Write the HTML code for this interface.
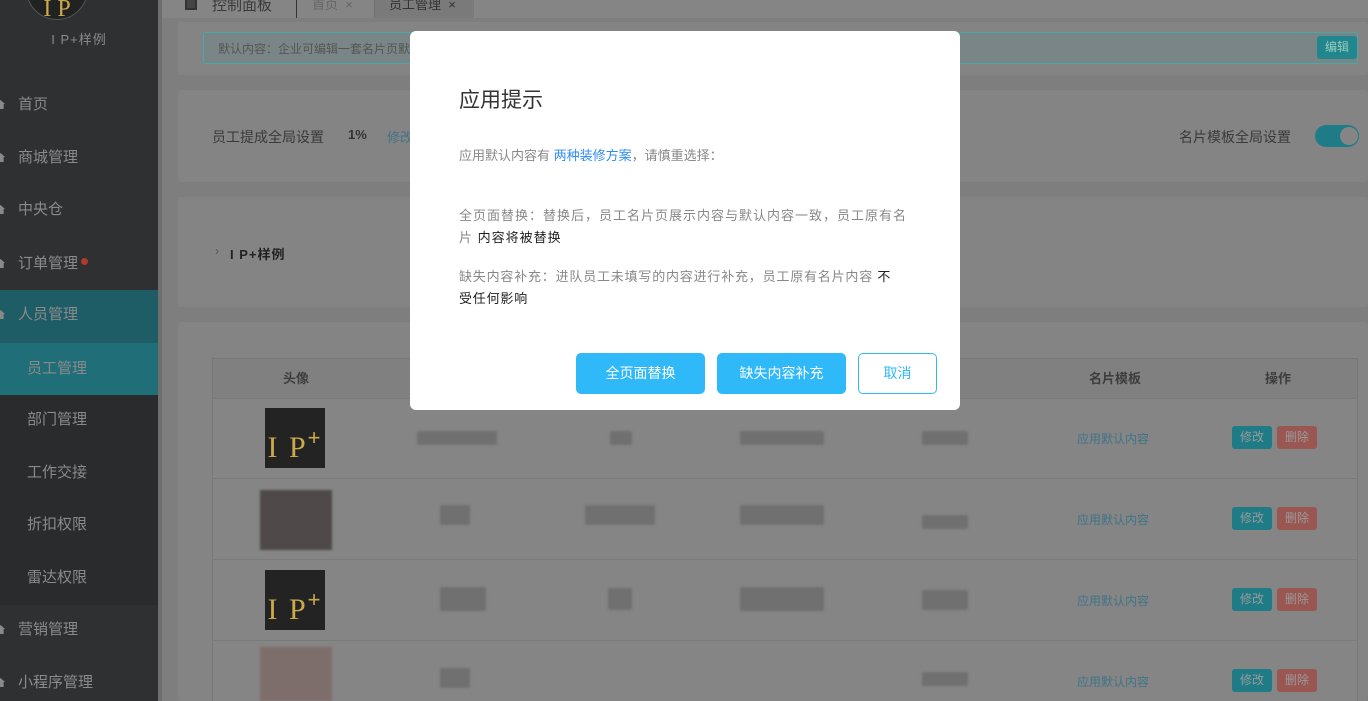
<!DOCTYPE html>
<html style="overflow:hidden;width:1368px;height:701px"><head><meta charset="utf-8">
<style>
*{margin:0;padding:0;box-sizing:border-box}
body{width:1368px;height:701px;overflow:hidden;position:relative;background:#7e7e7e;font-family:"Liberation Sans","Noto Sans CJK SC",sans-serif;font-size:14px}
.abs{position:absolute}
.side{left:0;top:0;width:158px;height:701px;background:#2f3032}
.strip{left:158px;top:0;width:4px;height:701px;background:#6e6e6e}
.mi{position:absolute;left:0;width:158px;height:52px;line-height:52px;color:#8a8a8a;font-size:15px;padding-left:18px}
.mi i{position:absolute;left:-4px;top:21px;width:9px;height:9px;background:#8a8a8a;clip-path:polygon(50% 0,100% 45%,85% 45%,85% 100%,15% 100%,15% 45%,0 45%)}
.sub{padding-left:27px}
.card{position:absolute;left:178px;right:0;background:#848484;border-radius:3px}
.th{position:absolute;top:368px;font-weight:bold;color:#3d3d3d;font-size:13px}
.row{position:absolute;left:212px;width:1146px;border-top:1px solid #7a7a7a}
.logo{position:absolute;left:265px;width:60px;height:60px;background:#232323;color:#c9a94a;font-family:"Liberation Serif",serif;font-size:30px;line-height:60px;text-align:center;letter-spacing:2px}
.logo sup{font-size:22px;font-family:"Liberation Sans";vertical-align:12px}
.blur{position:absolute;height:14px;background:#707070;border-radius:2px;filter:blur(1px)}
.link{position:absolute;left:1077px;color:#3f7487;font-size:12px}
.b1,.b2{position:absolute;width:40px;height:23px;line-height:23px;text-align:center;font-size:12px;color:#9a9a9a;border-radius:3px}
.b1{left:1232px;background:#1f7c86}.b2{left:1277px;background:#9a5650}
.modal{left:410px;top:31px;width:550px;height:379px;background:#fff;border-radius:6px}
.btn{position:absolute;top:322px;height:41px;line-height:41px;text-align:center;font-size:14px;border-radius:5px;color:#fff;background:#30b9f9}
</style></head><body>
<div class="abs side">
 <div class="abs" style="left:26px;top:-42px;width:62px;height:62px;border-radius:50%;background:#222;border:1px solid #555;color:#c9a94a;text-align:center;font-family:'Liberation Serif';font-size:24px;line-height:100px">I P</div>
 <div class="abs" style="left:0;width:158px;top:29px;text-align:center;color:#8a8a8a;font-size:13px;letter-spacing:1px">I P+样例</div>
 <div class="mi" style="top:79px"><i></i>首页</div>
 <div class="mi" style="top:132px"><i></i>商城管理</div>
 <div class="mi" style="top:184px"><i></i>中央仓</div>
 <div class="mi" style="top:238px"><i></i>订单管理<span style="display:inline-block;width:7px;height:7px;border-radius:50%;background:#b03a2a;margin-left:3px;vertical-align:3px"></span></div>
 <div class="mi" style="top:290px;background:#1f5d66;height:53px;line-height:50px"><i style="top:20px"></i>人员管理</div>
 <div class="abs" style="top:343px;left:0;width:158px;height:262px;background:#2a2b2d"></div>
 <div class="mi sub" style="top:343px;background:#1f6e78">员工管理</div>
 <div class="mi sub" style="top:394px">部门管理</div>
 <div class="mi sub" style="top:447px">工作交接</div>
 <div class="mi sub" style="top:499px">折扣权限</div>
 <div class="mi sub" style="top:552px">雷达权限</div>
 <div class="mi" style="top:604px"><i></i>营销管理</div>
 <div class="mi" style="top:657px"><i></i>小程序管理</div>
</div>
<div class="abs strip"></div>
<div class="abs" style="left:162px;top:0;right:0;height:18px;background:#858585"></div>
<div class="abs" style="left:185px;top:-2px;width:12px;height:12px;border:2px solid #333;background:#444"></div>
<div class="abs" style="left:212px;top:-6px;color:#3a3a3a;font-size:15px">控制面板</div>
<div class="abs" style="left:296px;top:0;width:1px;height:18px;background:#333"></div>
<div class="abs" style="left:312px;top:-6px;color:#666;font-size:13px">首页 &nbsp;×</div>
<div class="abs" style="left:374px;top:0;width:100px;height:18px;background:#7a7a7a;border-left:1px solid #6e6e6e"></div>
<div class="abs" style="left:389px;top:-6px;color:#333;font-size:13px">员工管理 &nbsp;×</div>

<div class="card" style="top:22px;height:53px"></div>
<div class="abs" style="left:203px;top:32px;width:1155px;height:32px;background:#7a8685;border:1px solid #4aa8ac;border-radius:3px"></div>
<div class="abs" style="left:218px;top:40px;color:#555;font-size:12px">默认内容：企业可编辑一套名片页默</div>
<div class="abs" style="left:1317px;top:36px;width:40px;height:23px;background:#22868f;border-radius:3px;color:#9cb;font-size:12px;text-align:center;line-height:23px">编辑</div>

<div class="card" style="top:90px;height:92px"></div>
<div class="abs" style="left:212px;top:127px;color:#3a3a3a;font-size:14px">员工提成全局设置</div>
<div class="abs" style="left:348px;top:127px;color:#333;font-weight:bold;font-size:13px">1%</div>
<div class="abs" style="left:387px;top:127px;color:#3f7487;font-size:13px">修改</div>
<div class="abs" style="left:1179px;top:127px;color:#3a3a3a;font-size:14px">名片模板全局设置</div>
<div class="abs" style="left:1315px;top:125px;width:44px;height:22px;background:#1f7c86;border-radius:11px"></div>
<div class="abs" style="left:1340px;top:127px;width:18px;height:18px;background:#858585;border-radius:50%"></div>

<div class="card" style="top:197px;height:110px"></div>
<div class="abs" style="left:215px;top:244px;color:#555;font-size:12px">›</div>
<div class="abs" style="left:230px;top:244px;color:#222;font-size:13px;font-weight:bold;letter-spacing:1px">I P+样例</div>

<div class="card" style="top:322px;height:379px"></div>
<div class="abs" style="left:212px;top:358px;width:1146px;height:343px;border:1px solid #777;border-bottom:none;background:#858585"></div>
<div class="abs" style="left:213px;top:359px;width:1144px;height:39px;background:#808080"></div>
<div class="th" style="left:283px">头像</div>
<div class="th" style="left:1089px">名片模板</div>
<div class="th" style="left:1265px">操作</div>

<div class="row" style="top:398px;height:81px"></div>
<div class="row" style="top:478px;height:81px"></div>
<div class="row" style="top:559px;height:81px"></div>
<div class="row" style="top:640px;height:61px"></div>

<div class="logo" style="top:408px">I P<sup>+</sup></div>
<div class="abs" style="left:260px;top:490px;width:72px;height:60px;background:#4f4949;filter:blur(1px)"></div>
<div class="logo" style="top:570px">I P<sup>+</sup></div>
<div class="abs" style="left:260px;top:647px;width:72px;height:54px;background:#7d6e6c;filter:blur(1px)"></div>

<div class="blur" style="left:417px;top:431px;width:80px"></div>
<div class="blur" style="left:610px;top:431px;width:22px"></div>
<div class="blur" style="left:740px;top:431px;width:84px"></div>
<div class="blur" style="left:922px;top:431px;width:46px"></div>
<div class="blur" style="left:440px;top:505px;width:30px;height:20px"></div>
<div class="blur" style="left:585px;top:505px;width:70px;height:20px"></div>
<div class="blur" style="left:740px;top:505px;width:84px;height:20px"></div>
<div class="blur" style="left:922px;top:515px;width:46px"></div>
<div class="blur" style="left:440px;top:587px;width:46px;height:24px"></div>
<div class="blur" style="left:608px;top:588px;width:24px;height:22px"></div>
<div class="blur" style="left:740px;top:587px;width:84px;height:24px"></div>
<div class="blur" style="left:922px;top:590px;width:46px;height:20px"></div>
<div class="blur" style="left:440px;top:668px;width:30px;height:20px"></div>
<div class="blur" style="left:922px;top:672px;width:46px"></div>

<div class="link" style="top:430px">应用默认内容</div>
<div class="link" style="top:511px">应用默认内容</div>
<div class="link" style="top:592px">应用默认内容</div>
<div class="link" style="top:673px">应用默认内容</div>
<div class="b1" style="top:426px">修改</div><div class="b2" style="top:426px">删除</div>
<div class="b1" style="top:507px">修改</div><div class="b2" style="top:507px">删除</div>
<div class="b1" style="top:588px">修改</div><div class="b2" style="top:588px">删除</div>
<div class="b1" style="top:669px">修改</div><div class="b2" style="top:669px">删除</div>

<div class="abs modal">
 <div class="abs" style="left:49px;top:53px;font-size:21px;color:#333">应用提示</div>
 <div class="abs" style="left:49px;top:114px;font-size:13px;color:#888">应用默认内容有 <span style="color:#2f8cf0">两种装修方案</span>，请慎重选择：</div>
 <div class="abs" style="left:49px;top:174px;width:480px;font-size:13px;color:#888;line-height:22px;white-space:nowrap;letter-spacing:1px">全页面替换：替换后，员工名片页展示内容与默认内容一致，员工原有名<br>片 <span style="color:#222">内容将被替换</span></div>
 <div class="abs" style="left:49px;top:235px;width:480px;font-size:13px;color:#888;line-height:22px;white-space:nowrap;letter-spacing:0.8px">缺失内容补充：进队员工未填写的内容进行补充，员工原有名片内容 <span style="color:#222">不<br>受任何影响</span></div>
 <div class="btn" style="left:166px;width:129px">全页面替换</div>
 <div class="btn" style="left:307px;width:129px">缺失内容补充</div>
 <div class="btn" style="left:448px;width:79px;background:#fff;border:1px solid #30b9f9;color:#30b9f9;line-height:39px">取消</div>
</div>
</body></html>
